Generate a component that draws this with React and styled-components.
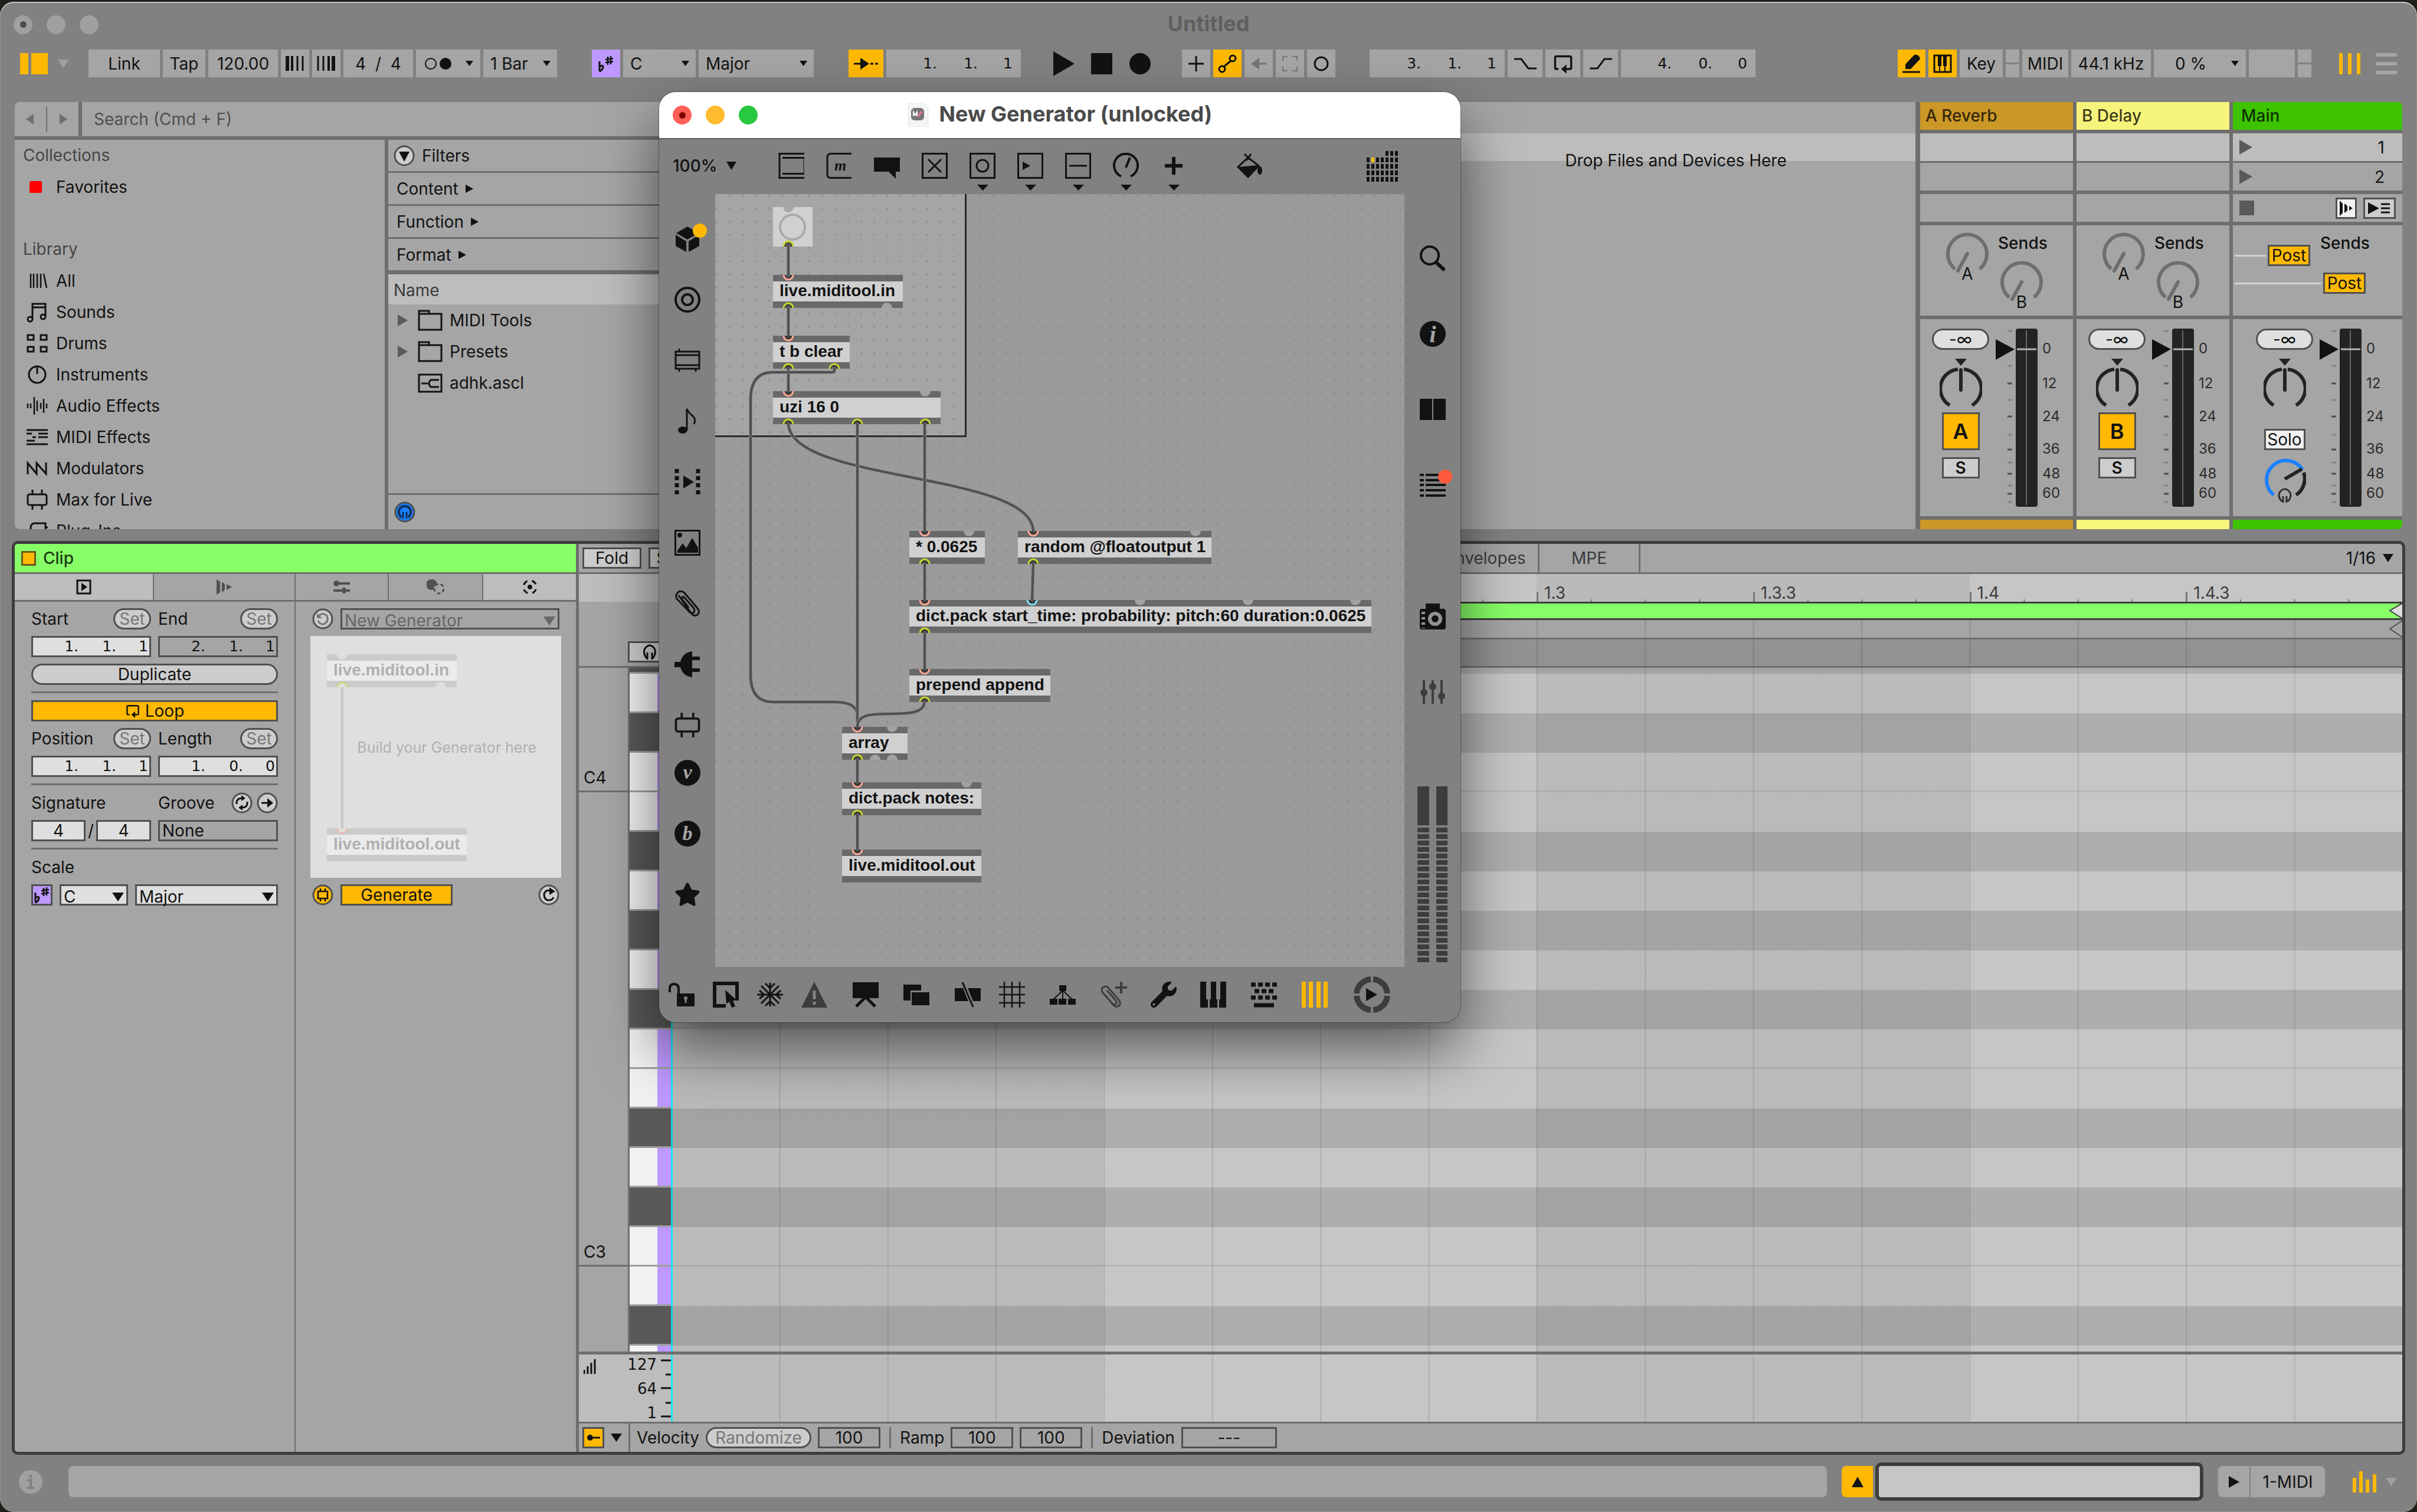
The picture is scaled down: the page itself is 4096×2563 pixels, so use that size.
import React from 'react';
import styled, { createGlobalStyle, css } from 'styled-components';
import { FaStar, FaWrench } from 'react-icons/fa';

const color = {
	window: '#818181',
	control: '#a5a5a5',
	lit: '#bdbdbd',
	line: '#6e6e6e',
	dark: '#3d3d3d',
	edge: '#505050',
	ink: '#121212',
	orange: '#ffb902',
	purple: '#bd99ff',
	green: '#87ff67',
	field: '#dfdfdf',
	button: '#cdcdcd',
};

const GlobalStyle = createGlobalStyle`
	*, *::before, *::after {
		box-sizing:border-box;
	}
	body {
		margin:0;
		background:#211f1a;
		color:${color.ink};
		font-family:Inter, "Liberation Sans", sans-serif;
		font-size:28px;
		line-height:36px;
	}
	button, input, select {
		margin:0;
		padding:0;
		border:0;
		border-radius:0;
		background:none;
		color:inherit;
		font:inherit;
	}
	svg {
		display:block;
		flex:none;
	}
`;

/* ---------- shared parts ---------- */

const Desktop = styled.div`
	position:relative;
	min-height:100vh;
	padding-top:3px;
	overflow:hidden;
`;

const LiveWindow = styled.main`
	display:flex;
	flex-direction:column;
	min-height:calc(100vh - 3px);
	background:${color.window};
	border-radius:24px;
	box-shadow:inset 0 2px 0 #c4c4c4, inset 0 0 0 1px #929292;
`;

const Grow = styled.div`
	flex:1;
`;

const Lights = styled.div`
	display:flex;
	gap:24px;
`;

const Light = styled.button`
	width:32px;
	height:32px;
	border-radius:16px;
	background:${props => props.$color || '#a0a0a0'};
	display:grid;
	place-items:center;

	&::after {
		content:'';
		width:11px;
		height:11px;
		border-radius:6px;
		background:${props => props.$dot || 'transparent'};
	}
`;

const Tri = ({ dir = 'down', w = 20, h = 16, fill = 'currentColor' }) => {
	const paths = {
		down : `M0 0H${w}L${w / 2} ${h}Z`,
		up   : `M0 ${h}H${w}L${w / 2} 0Z`,
		right: `M0 0L${w} ${h / 2}L0 ${h}Z`,
		left : `M${w} 0V${h}L0 ${h / 2}Z`,
	};
	return (
		<svg width={w} height={h} fill={fill}>
			<path d={paths[dir]} />
		</svg>
	);
};

const Draw = ({ w = 36, h = 36, s = 3, children }) => (
	<svg width={w} height={h} viewBox={`0 0 ${w} ${h}`} fill="none" stroke="currentColor" strokeWidth={s}>
		{children}
	</svg>
);

const solid = { fill: 'currentColor', stroke: 'none' };

const PickBox = styled.label`
	display:grid;
	grid-template-columns:1fr;
	align-items:center;
	flex:${props => props.$w ? 'none' : 1};
	width:${props => props.$w ? `${props.$w}px` : 'auto'};
	height:${props => props.$h}px;
	background:${props => props.$bg};
	border:${props => props.$flat ? '0' : `3px solid ${color.edge}`};
	color:${props => props.$ink || color.ink};

	select {
		grid-area:1 / 1;
		width:100%;
		height:100%;
		padding-left:${props => props.$flat ? 12 : 4}px;
		appearance:none;
	}
	svg {
		grid-area:1 / 1;
		justify-self:end;
		margin-right:${props => props.$flat ? 11 : 4}px;
		pointer-events:none;
	}
`;

const Pick = ({ label, value, flat, w, h = 36, bg = color.field, ink }) => (
	<PickBox $flat={flat} $w={w} $h={h} $bg={bg} $ink={ink}>
		<select aria-label={label} defaultValue={value}>
			<option>{value}</option>
		</select>
		{flat ? <Tri w={13} h={9} /> : <Tri w={20} h={15} />}
	</PickBox>
);

/* ---------- title and control bar ---------- */

const TitleBar = styled.header`
	display:grid;
	grid-template-columns:1fr auto 1fr;
	align-items:center;
	height:77px;
	padding:0 23px;
`;

const Title = styled.h1`
	margin:0;
	padding-bottom:4px;
	font-size:36px;
	font-weight:700;
	color:${props => props.$ink || '#5f5f5f'};
`;

const ControlBar = styled.div`
	display:flex;
	align-items:center;
	padding:4px 34px 42px;
`;

const Group = styled.div`
	display:flex;
	align-items:center;
	gap:${props => props.$gap || 5}px;
	margin-left:${props => props.$left || 0}px;
`;

const Cell = styled.button`
	display:flex;
	align-items:center;
	justify-content:${props => props.$between ? 'space-between' : 'center'};
	padding:0 ${props => props.$between ? 12 : 0}px;
	width:${props => props.$w}px;
	height:47px;
	background:${props => props.$on || color.control};
	color:${props => props.$dim ? '#757575' : color.ink};
	white-space:pre;
`;

const CpuLoad = styled.span`
	flex:1;
	padding-right:18px;
	text-align:center;
`;

const SplitCell = styled.div`
	width:${props => props.$w}px;
	height:47px;
	background:linear-gradient(${color.control} 22px, ${color.window} 22px 25px, ${color.control} 25px);
`;

const Segments = styled.div`
	display:flex;
	justify-content:flex-end;
	align-items:center;
	flex:none;
	width:${props => props.$w}px;
	height:${props => props.$h}px;
	padding-right:${props => props.$pad}px;
	background:${props => props.$bg};
	border:${props => props.$flat ? '0' : `3px solid ${color.edge}`};

	input {
		width:${props => props.$step}px;
		text-align:right;
		font-family:"DejaVu Sans", sans-serif;
		font-size:25px;
	}
	input:last-child {
		width:${props => props.$step - 10}px;
	}
`;

const Position = ({ label, value, flat, w = 203, bg = color.field }) => {
	const parts = value.split(' ');
	return (
		<Segments $flat={flat} $w={w} $h={flat ? 47 : 36} $bg={flat ? color.control : bg} $step={flat ? 69 : 64} $pad={flat ? 14 : 2}>
			{parts.map((part, i) => (
				<input key={i} aria-label={`${label} ${['bars', 'beats', 'sixteenths'][i]}`} defaultValue={part} />
			))}
		</Segments>
	);
};

const FlatSharp = () => (
	<Draw w={30} h={32} s={2}>
		<path d="M4 12V29M4 21Q10 17 10 22Q9 27 4 29" strokeWidth="3" />
		<path d="M18 4V18M23 3V17M14 9L27 7M14 14L27 12" strokeWidth="2.5" />
	</Draw>
);

const LoopIcon = ({ w = 30, h = 30 }) => (
	<svg width={w} height={h} viewBox="0 0 30 30" fill="none" stroke="currentColor" strokeWidth="3">
		<path d="M8 23H5Q3 23 3 21V6Q3 4 5 4H25Q27 4 27 6V21Q27 23 25 23H16" />
		<path d="M20 16V30L12 23Z" {...solid} />
	</svg>
);

const Controls = () => (
	<ControlBar>
		<svg width="47" height="36" fill={color.orange}><path d="M0 0H14V36H0ZM19 0H47V36H19Z" /></svg>
		<Group $left={17}><Tri w={19} h={14} fill="#a0a0a0" /></Group>
		<Group $left={33}>
			<Cell $w={121}>Link</Cell>
			<Cell $w={72}>Tap</Cell>
			<Cell $w={118}>120.00</Cell>
			<Cell $w={48} aria-label="Nudge down">
				<Draw w={32} h={25}><path d="M3 0V25" strokeWidth="6" /><path d="M11 0V25" strokeWidth="4" /><path d="M20 0V25M29 0V25" strokeWidth="3" /></Draw>
			</Cell>
			<Cell $w={48} aria-label="Nudge up">
				<Draw w={32} h={25}><path d="M2 0V25M11 0V25" strokeWidth="3" /><path d="M20 0V25" strokeWidth="4" /><path d="M28 0V25" strokeWidth="6" /></Draw>
			</Cell>
			<Cell $w={118}>4  /  4</Cell>
			<Cell $w={109} $between aria-label="Metronome">
				<Draw w={48} h={24} s={2}><circle cx="13" cy="12" r="9" /><circle cx="38" cy="12" r="10" {...solid} /></Draw>
				<Tri w={13} h={9} />
			</Cell>
			<Pick flat label="Quantization" value="1 Bar" w={125} h={47} bg={color.control} />
		</Group>
		<Group $left={59}>
			<Cell $w={48} $on={color.purple} aria-label="Scale"><FlatSharp /></Cell>
			<Pick flat label="Root note" value="C" w={123} h={47} bg={color.control} />
			<Pick flat label="Scale name" value="Major" w={195} h={47} bg={color.control} />
		</Group>
		<Group $left={59}>
			<Cell $w={59} $on={color.orange} aria-label="Follow">
				<Draw w={42} h={20}><path d="M0 10H14M28 10H33M36 10H41" strokeWidth="3" /><path d="M11 0L26 10L11 20Z" {...solid} /></Draw>
			</Cell>
			<Position flat label="Song position" value="1. 1. 1" w={228} />
		</Group>
		<Group $left={55} $gap={28}>
			<Tri dir="right" w={36} h={42} />
			<svg width="36" height="36"><rect width="36" height="36" fill={color.ink} /></svg>
			<svg width="38" height="38"><circle cx="19" cy="19" r="18" fill={color.ink} /></svg>
		</Group>
		<Group $left={52}>
			<Cell $w={48} aria-label="Overdub"><Draw w={26} h={26}><path d="M13 0V26M0 13H26" /></Draw></Cell>
			<Cell $w={48} $on={color.orange} aria-label="Automation">
				<Draw w={32} h={32}><circle cx="7" cy="25" r="5" /><circle cx="25" cy="7" r="5" /><path d="M10 21L22 11" /></Draw>
			</Cell>
			<Cell $w={48} $dim aria-label="Re-enable">
				<Draw w={26} h={20}><path d="M12 10H26" /><path d="M14 0V20L0 10Z" {...solid} /></Draw>
			</Cell>
			<Cell $w={48} $dim aria-label="Capture">
				<Draw w={26} h={26} s={2}><path d="M1 8V1H9M17 1H25V8M25 18V25H17M9 25H1V18" /></Draw>
			</Cell>
			<Cell $w={48} aria-label="Session record"><Draw w={28} h={28}><circle cx="14" cy="14" r="11" /></Draw></Cell>
		</Group>
		<Group $left={58}>
			<Position flat label="Loop start" value="3. 1. 1" w={229} />
			<Cell $w={59} aria-label="Punch in"><Draw w={38} h={20}><path d="M0 2H12L24 18H38" /></Draw></Cell>
			<Cell $w={59} aria-label="Loop"><LoopIcon w={38} h={34} /></Cell>
			<Cell $w={59} aria-label="Punch out"><Draw w={38} h={20}><path d="M0 18H13L25 2H38" /></Draw></Cell>
			<Position flat label="Loop length" value="4. 0. 0" w={228} />
		</Group>
		<Grow />
		<Group>
			<Cell $w={47} $on={color.orange} aria-label="Draw mode">
				<Draw w={32} h={32}><path d="M0 30H30" /><path d="M5 25V17L20 1Q28 -1 30 8L14 25Z" {...solid} /></Draw>
			</Cell>
			<Cell $w={48} $on={color.orange} aria-label="Computer keyboard">
				<Draw w={32} h={32}><rect x="2" y="2" width="28" height="28" /><path d="M11 2V20M20 2V20" strokeWidth="6" /><path d="M11 20V30M20 20V30" strokeWidth="2" /></Draw>
			</Cell>
			<Cell $w={73}>Key</Cell>
			<SplitCell $w={23} />
			<Cell $w={78}>MIDI</Cell>
			<Cell $w={135}>44.1 kHz</Cell>
			<Cell $w={156} $between><CpuLoad>0 %</CpuLoad><Tri w={13} h={9} /></Cell>
			<Cell $w={78} aria-label="Disk overload" />
			<SplitCell $w={23} />
		</Group>
		<Group $left={47} $gap={26}>
			<svg width="36" height="36" fill={color.orange}><path d="M0 0H6V36H0ZM15 0H21V36H15ZM30 0H36V36H30Z" /></svg>
			<svg width="36" height="36" fill="#a5a5a5"><path d="M0 0H36V6H0ZM0 15H36V21H0ZM0 30H36V36H0Z" /></svg>
		</Group>
	</ControlBar>
);

/* ---------- browser ---------- */

const Upper = styled.section`
	display:flex;
	margin:0 25px 20px;
	background:${color.line};
	border-radius:8px;
	overflow:hidden;
`;

const Browser = styled.div`
	display:flex;
	flex-direction:column;
	width:1560px;
	max-height:724px;
	overflow:hidden;
`;

const SearchRow = styled.div`
	display:flex;
	gap:6px;
	height:58px;
	margin-bottom:6px;
	flex:none;
`;

const NavPair = styled.div`
	display:flex;
	align-items:center;
	justify-content:center;
	gap:21px;
	width:108px;
	background:${color.control};
	color:${color.line};
`;

const NavRule = styled.span`
	width:2px;
	height:42px;
	background:${color.line};
`;

const SearchInput = styled.input`
	flex:1;
	padding-left:20px;
	background:${color.control};

	&::placeholder {
		color:#4f4f4f;
		opacity:1;
	}
`;

const BrowserBody = styled.div`
	display:flex;
	gap:6px;
	flex:1;
	min-height:0;
`;

const Sidebar = styled.nav`
	width:627px;
	background:${color.control};
	overflow:hidden;
`;

const SideHead = styled.h2`
	margin:0 0 0 14px;
	font-size:28px;
	font-weight:400;
	line-height:53px;
	color:#454545;
`;

const SideRow = styled.a`
	display:flex;
	align-items:center;
	gap:14px;
	height:53px;
	padding-left:20px;
	color:${color.ink};
	text-decoration:none;
`;

const Gap = styled.div`
	height:53px;
`;

const Swatch = styled.span`
	width:21px;
	height:20px;
	margin:0 10px 0 5px;
	border-radius:2px;
	background:#ff0000;
`;

const Results = styled.div`
	display:flex;
	flex-direction:column;
	flex:1;
	background:${color.control};
`;

const FilterRow = styled.div`
	display:flex;
	align-items:center;
	gap:12px;
	height:56px;
	padding-left:${props => props.$tight ? 9 : 14}px;
	border-bottom:3px solid ${color.line};
	flex:none;
`;

const NameHead = styled.div`
	height:55px;
	padding:9px 9px 0;
	border-top:4px solid ${color.line};
	background:${color.lit};
	color:#3a3a3a;
	flex:none;
`;

const FileRow = styled.div`
	display:flex;
	align-items:center;
	height:53px;
	padding-left:16px;
	flex:none;
`;

const FileMark = styled.span`
	width:34px;
	color:#5a5a5a;
`;

const FileName = styled.span`
	margin-left:12px;
`;

const BrowserFoot = styled.div`
	display:flex;
	align-items:center;
	height:61px;
	margin-top:auto;
	padding-left:10px;
	border-top:3px solid ${color.line};
	flex:none;
`;

const M4L = ({ w = 36, s = 3 }) => (
	<svg width={w} height={w} viewBox="0 0 36 36" fill="none" stroke="currentColor" strokeWidth={s}>
		<rect x="2" y="9" width="32" height="18" rx="3" />
		<path d="M10 1V8M26 1V8M10 28V35M26 28V35" />
	</svg>
);

const library = [
	['All', <Draw><path d="M7 6V30M12 6V30M18 6V30M24 6V30M29 6L34 30" strokeWidth="2.5" /></Draw>],
	['Sounds', <Draw><path d="M10 29V4H32V25M10 10H32" /><circle cx="6" cy="30" r="4" /><circle cx="28" cy="26" r="4" /></Draw>],
	['Drums', <Draw><path d="M2 4H12V12H2ZM24 4H34V12H24ZM2 24H12V32H2ZM24 24H34V32H24Z" /></Draw>],
	['Instruments', <Draw><circle cx="18" cy="18" r="14" /><path d="M18 4V17" /></Draw>],
	['Audio Effects', <Draw><path d="M2 14V22M7 14V22M13 3V33M18 9V27M24 13V23M29 6V30M34 14V22" strokeWidth="2.5" /></Draw>],
	['MIDI Effects', <Draw><path d="M0 6H36M0 12H9M20 12H36M10 18H16M20 18H36M0 24H14M0 30H36" /></Draw>],
	['Modulators', <Draw><path d="M2 28V9L17 27V9L33 27V8" /></Draw>],
	['Max for Live', <M4L />],
	['Plug-Ins', <Draw><path d="M32 5H14Q7 5 7 13V26Q7 32 14 32H32ZM32 12H38" /></Draw>],
];

const Folder = () => (
	<Draw w={42} h={36}><path d="M2 34V2H19V7H40V34ZM2 7H19" /></Draw>
);

const BrowserPane = () => (
	<Browser>
		<SearchRow>
			<NavPair><Tri dir="left" w={13} h={18} /><NavRule /><Tri dir="right" w={13} h={18} /></NavPair>
			<SearchInput aria-label="Search" placeholder="Search (Cmd + F)" />
		</SearchRow>
		<BrowserBody>
			<Sidebar>
				<SideHead>Collections</SideHead>
				<SideRow href="#favorites"><Swatch />Favorites</SideRow>
				<Gap />
				<SideHead>Library</SideHead>
				{library.map(([name, icon]) => (
					<SideRow key={name} href={`#${name}`}>{icon}{name}</SideRow>
				))}
			</Sidebar>
			<Results>
				<FilterRow $tight>
					<Draw><circle cx="18" cy="18" r="16" fill={color.button} stroke={color.edge} /><path d="M9 11H27L18 28Z" {...solid} /></Draw>
					Filters
				</FilterRow>
				{['Content', 'Function', 'Format'].map(name => (
					<FilterRow key={name}>{name}<Tri dir="right" w={13} h={14} /></FilterRow>
				))}
				<NameHead>Name</NameHead>
				<FileRow><FileMark><Tri dir="right" w={17} h={20} /></FileMark><Folder /><FileName>MIDI Tools</FileName></FileRow>
				<FileRow><FileMark><Tri dir="right" w={17} h={20} /></FileMark><Folder /><FileName>Presets</FileName></FileRow>
				<FileRow>
					<FileMark />
					<Draw w={42} h={36}><path d="M2 4H40V33H2ZM6 19H17M36 13H22Q16 19 22 25H36" /></Draw>
					<FileName>adhk.ascl</FileName>
				</FileRow>
				<BrowserFoot>
					<Draw>
						<circle cx="18" cy="18" r="16" fill="#1a80ff" stroke={color.edge} />
						<path d="M12 27Q7 22 8 15Q11 8 18 8Q25 8 28 15Q29 22 24 27" stroke="#12305c" strokeWidth="4" />
						<path d="M15 18V29M21 18V29" stroke="#12305c" strokeWidth="3" />
					</Draw>
				</BrowserFoot>
			</Results>
		</BrowserBody>
	</Browser>
);

/* ---------- session and mixer ---------- */

const Session = styled.div`
	flex:1;
	display:flex;
	justify-content:flex-end;
	background:linear-gradient(${color.control} 53px, ${color.lit} 53px 100px, ${color.control} 100px);
`;

const DropZone = styled.p`
	width:812px;
	margin:0;
	padding-top:81px;
	text-align:center;
`;

const Mixer = styled.div`
	display:flex;
	gap:6px;
	padding-left:8px;
`;

const Track = styled.div`
	display:flex;
	flex-direction:column;
	gap:6px;
	width:${props => props.$w}px;
`;

const TrackName = styled.div`
	height:47px;
	padding:5px 0 0 ${props => props.$pad || 9}px;
	background:${props => props.$color};
	color:rgba(0, 0, 0, 0.75);
	font-weight:500;
`;

const Slots = styled.div`
	display:flex;
	flex-direction:column;
	gap:3px;
`;

const Slot = styled.div`
	display:flex;
	align-items:center;
	gap:11px;
	height:47px;
	padding:0 ${props => props.$right || 30}px 0 11px;
	background:${props => props.$lit ? color.lit : color.control};
	color:${color.ink};
`;

const SlotNumber = styled.span`
	margin-left:auto;
`;

const Sends = styled.div`
	display:flex;
	height:153px;
	padding:12px 0 0 44px;
	background:${color.control};
`;

const SendsMain = styled.div`
	height:153px;
	padding:12px 0 0 3px;
	background:${color.control};
`;

const SendColumn = styled.div`
	display:flex;
	flex-direction:column;
	gap:12px;
	margin-left:16px;
`;

const SendsTitle = styled.span`
	font-weight:500;
	margin-left:${props => props.$left || 0}px;
`;

const SendKnobBox = styled.div`
	padding-left:4px;
`;

const MainSendRow = styled.div`
	display:flex;
	align-items:flex-start;
	margin-top:${props => props.$top || 0}px;
`;

const SendLine = styled.div`
	display:flex;
	align-items:center;
	gap:3px;
	margin-top:${props => props.$top || 0}px;

	&::before {
		content:'';
		width:${props => props.$w}px;
		height:3px;
		background:#d2d2d2;
	}
`;

const SmallButton = styled.button`
	display:flex;
	align-items:center;
	justify-content:center;
	gap:8px;
	flex:${props => props.$w ? 'none' : 1};
	width:${props => props.$w ? `${props.$w}px` : 'auto'};
	height:${props => props.$h || 36}px;
	border:3px solid ${color.edge};
	border-radius:${props => props.$round ? 18 : 0}px;
	background:${props => props.$bg || color.button};
	color:${props => props.$dim ? '#777777' : color.ink};
	font-size:${props => props.$big ? 36 : 28}px;
	font-weight:${props => props.$bold ? 600 : 400};
	line-height:28px;
	margin-top:${props => props.$top || 0}px;
`;

const Strip = styled.div`
	display:flex;
	align-items:flex-start;
	height:334px;
	padding:16px 0 0 ${props => props.$left}px;
	background:${color.control};
`;

const StripLeft = styled.div`
	display:flex;
	flex-direction:column;
	align-items:center;
	width:97px;
	margin-right:11px;

	button {
		flex:none;
	}
`;

const KnobGap = styled.div`
	height:${props => props.$h}px;
`;

const TrackFoot = styled.div`
	height:16px;
	background:${props => props.$color};
`;

const SendKnob = ({ name }) => (
	<svg width="72" height="92" fill="none" stroke="#6e6e6e" strokeWidth="6">
		<path d="M15 62A33 33 0 1 1 57 62" />
		<path d="M36 36L20 65" strokeLinecap="round" />
		<text x="36" y="80" textAnchor="middle" fontSize="28" fill={color.ink} stroke="none">{name}</text>
	</svg>
);

const PanKnob = () => (
	<svg width="72" height="86" fill="none" stroke="#232323" strokeWidth="6">
		<path d="M26 0H46L36 12Z" fill="#232323" stroke="none" />
		<path d="M17 79A33 33 0 0 1 31 18M41 18A33 33 0 0 1 55 79" />
		<path d="M36 19V53" strokeLinecap="round" />
	</svg>
);

const CueKnob = () => (
	<svg width="72" height="80" fill="none" strokeWidth="6">
		<path d="M17 64A33 33 0 1 1 66 21" stroke="#1a80ff" />
		<path d="M68 26A33 33 0 0 1 55 64M36 37L65 20" stroke="#232323" />
		<path d="M31 75Q24 68 27 60Q31 54 36 54Q41 54 45 60Q48 68 41 75M33 66V77M39 66V77" stroke="#2c2c2c" strokeWidth="3" />
	</svg>
);

const scaleLabels = [[0, 33], [12, 92], [24, 148], [36, 203], [48, 245], [60, 278]];
const darkTicks = [93, 149, 205, 246, 280];
const lightTicks = [4, 63, 121, 180, 227, 266, 294];

const Meter = () => (
	<svg width="110" height="302">
		<path d="M0 18L32 35L0 53Z" fill={color.ink} />
		<rect x="34" y="0" width="37" height="302" rx="4" fill="#232323" />
		<path d="M52 3V299" stroke="#666666" strokeWidth="2" />
		<path d="M36 35H69" stroke="#b5b5b5" strokeWidth="3" />
		{darkTicks.map(y => <path key={y} d={`M20 ${y}H28`} stroke="#4c4c4c" strokeWidth="3" />)}
		{lightTicks.map(y => <path key={y} d={`M20 ${y}H28`} stroke="#858585" strokeWidth="3" />)}
		{scaleLabels.map(([text, y]) => (
			<text key={text} x="79" y={y + 9} fontSize="24" fill="#2c2c2c">{text}</text>
		))}
	</svg>
);

const ReturnTrack = ({ letter, name, tint }) => (
	<Track $w={259}>
		<TrackName $color={tint}>{letter} {name}</TrackName>
		<Slots><Slot $lit /><Slot /></Slots>
		<Slot />
		<Sends>
			<SendKnob name="A" />
			<SendColumn>
				<SendsTitle>Sends</SendsTitle>
				<SendKnobBox><SendKnob name="B" /></SendKnobBox>
			</SendColumn>
		</Sends>
		<Strip $left={20}>
			<StripLeft>
				<SmallButton $w={97} $round $bg={color.field}>-∞</SmallButton>
				<KnobGap $h={15} />
				<PanKnob />
				<SmallButton $w={64} $h={64} $top={5} $bold $big $bg={color.orange}>{letter}</SmallButton>
				<SmallButton $w={64} $top={12} $bold>S</SmallButton>
			</StripLeft>
			<Meter />
		</Strip>
		<TrackFoot $color={tint} />
	</Track>
);

const MixerPane = () => (
	<Mixer>
		<ReturnTrack letter="A" name="Reverb" tint="#cb9727" />
		<ReturnTrack letter="B" name="Delay" tint="#f7f47c" />
		<Track $w={287}>
			<TrackName $color="#3dc300" $pad={14}>Main</TrackName>
			<Slots>
				<Slot $lit><Tri dir="right" w={22} h={25} fill="#5a5a5a" /><SlotNumber>1</SlotNumber></Slot>
				<Slot><Tri dir="right" w={22} h={25} fill="#5a5a5a" /><SlotNumber>2</SlotNumber></Slot>
			</Slots>
			<Slot $right={11}>
				<svg width="25" height="25"><rect width="25" height="25" fill="#5a5a5a" /></svg>
				<Grow />
				<SmallButton $w={36} $bg="#f1f1f1" aria-label="Back to arrangement">
					<svg width="22" height="26" fill={color.ink}><path d="M0 0L5 5V21L0 26ZM8 5L13 9V17L8 21ZM16 9L22 13L16 17Z" /></svg>
				</SmallButton>
				<SmallButton $w={55} aria-label="Scene follow">
					<Draw w={40} h={20}><path d="M0 0L19 10L0 20Z" {...solid} /><path d="M22 3H37M22 10H37M22 17H37" /></Draw>
				</SmallButton>
			</Slot>
			<SendsMain>
				<MainSendRow>
					<SendLine $w={53} $top={21}><SmallButton $w={72} $bg={color.orange}>Post</SmallButton></SendLine>
					<SendsTitle $left={17}>Sends</SendsTitle>
				</MainSendRow>
				<MainSendRow $top={11}>
					<SendLine $w={147}><SmallButton $w={72} $bg={color.orange}>Post</SmallButton></SendLine>
				</MainSendRow>
			</SendsMain>
			<Strip $left={39}>
				<StripLeft>
					<SmallButton $w={97} $round $bg={color.field}>-∞</SmallButton>
					<KnobGap $h={15} />
					<PanKnob />
					<SmallButton $w={70} $top={33} $bg="#f1f1f1">Solo</SmallButton>
					<KnobGap $h={12} />
					<CueKnob />
				</StripLeft>
				<Meter />
			</Strip>
			<TrackFoot $color="#3dc300" />
		</Track>
	</Mixer>
);

/* ---------- clip view ---------- */

const Detail = styled.section`
	display:flex;
	flex:1;
	min-height:0;
	margin:0 20px;
	border:5px solid ${color.dark};
	border-radius:10px;
	overflow:hidden;
	background:${color.control};
`;

const Clip = styled.div`
	display:flex;
	flex-direction:column;
	flex:none;
	width:956px;
	border-right:5px solid ${color.line};
`;

const ClipHead = styled.label`
	display:flex;
	align-items:center;
	gap:12px;
	height:51px;
	padding-left:11px;
	background:${color.green};
	border-bottom:3px solid ${color.line};
	color:#1d3b14;
	font-weight:500;

	input {
		appearance:none;
		width:25px;
		height:25px;
		background:${color.orange};
		border:3px solid #6b5a1c;
	}
`;

const ClipTabs = styled.div`
	display:grid;
	grid-template-columns:236px 240px 158px 160px 157px;
	height:47px;
	border-bottom:3px solid ${color.line};
`;

const ClipTab = styled.button`
	display:grid;
	place-items:center;
	background:${props => props.$on ? color.lit : color.control};
	color:${props => props.$on ? color.ink : '#505050'};
	border-right:2px solid ${color.line};

	&:last-child {
		border-right:0;
	}
`;

const ClipBody = styled.div`
	display:flex;
	flex:1;
`;

const ClipColumn = styled.div`
	display:flex;
	flex-direction:column;
	gap:11px;
	flex:${props => props.$last ? 1 : 'none'};
	width:476px;
	padding:11px 28px;
	border-right:${props => props.$last ? 0 : 2}px solid ${color.line};
`;

const Line = styled.div`
	display:flex;
	align-items:center;
	gap:12px;
	height:36px;
	flex:none;
`;

const Half = styled.div`
	display:flex;
	align-items:center;
	gap:${props => props.$gap || 7}px;
	width:203px;
	flex:none;
`;

const Rule = styled.hr`
	width:100%;
	height:4px;
	margin:0;
	border:0;
	border-bottom:1px solid ${color.control};
	background:${color.line};
	flex:none;
`;

const Num = styled.input`
	width:${props => props.$w}px;
	height:36px;
	flex:none;
	padding:${props => props.$start ? '0 4px' : 0};
	border:3px solid ${color.edge};
	background:${props => props.$plain ? color.control : color.field};
	text-align:${props => props.$start ? 'left' : 'center'};
`;

const Preview = styled.div`
	position:relative;
	display:flex;
	align-items:center;
	justify-content:flex-end;
	height:410px;
	margin:0 -3px;
	padding:0 42px 32px 0;
	background:${color.field};
	color:#b0b0b0;
	font-size:25px;
`;

const PreviewCord = styled.span`
	position:absolute;
	left:52px;
	top:86px;
	width:4px;
	height:240px;
	background:#c4c4c4;
`;

const RoundIcon = ({ bg = color.button, ink = color.ink, children }) => (
	<svg width="36" height="36" viewBox="0 0 36 36" fill="none" stroke={ink} strokeWidth="3">
		<circle cx="18" cy="18" r="16" fill={bg} stroke={color.edge} />
		{children}
	</svg>
);

const ClipPane = () => (
	<Clip>
		<ClipHead><input type="checkbox" defaultChecked />Clip</ClipHead>
		<ClipTabs>
			<ClipTab $on aria-label="Clip properties">
				<Draw w={26} h={26}><rect x="2" y="2" width="22" height="22" /><path d="M9 6L19 13L9 20Z" {...solid} /></Draw>
			</ClipTab>
			<ClipTab aria-label="Launch">
				<svg width="26" height="26" fill="currentColor"><path d="M0 0L6 4V22L0 26ZM9 4L14 8V18L9 22ZM17 8L26 13L17 18Z" /></svg>
			</ClipTab>
			<ClipTab aria-label="Transform controls">
				<Draw w={28} h={22}><path d="M6 5H28M0 17H28" strokeWidth="4" /><circle cx="5" cy="5" r="5" {...solid} /><path d="M18 12V22" strokeWidth="5" /></Draw>
			</ClipTab>
			<ClipTab aria-label="Transform">
				<Draw w={30} h={26}>
					<path d="M9 0A9 9 0 0 1 18 7Q12 10 12 17A9 9 0 1 1 9 0Z" {...solid} />
					<circle cx="21" cy="16" r="8" strokeDasharray="6 4" />
				</Draw>
			</ClipTab>
			<ClipTab $on aria-label="Generate">
				<Draw w={28} h={28}><circle cx="14" cy="14" r="11" strokeDasharray="9 8" strokeDashoffset="13" /><circle cx="14" cy="14" r="4" {...solid} /></Draw>
			</ClipTab>
		</ClipTabs>
		<ClipBody>
			<ClipColumn>
				<Line>
					<Half>Start<Grow /><SmallButton $w={64} $round $dim>Set</SmallButton></Half>
					<Half>End<Grow /><SmallButton $w={64} $round $dim>Set</SmallButton></Half>
				</Line>
				<Line>
					<Position label="Start" value="1. 1. 1" />
					<Position label="End" value="2. 1. 1" bg={color.control} />
				</Line>
				<Line><SmallButton $round>Duplicate</SmallButton></Line>
				<Rule />
				<Line><SmallButton $bg={color.orange}><LoopIcon w={26} h={24} />Loop</SmallButton></Line>
				<Line>
					<Half>Position<Grow /><SmallButton $w={64} $round $dim>Set</SmallButton></Half>
					<Half>Length<Grow /><SmallButton $w={64} $round $dim>Set</SmallButton></Half>
				</Line>
				<Line>
					<Position label="Position" value="1. 1. 1" />
					<Position label="Length" value="1. 0. 0" />
				</Line>
				<Rule />
				<Line>
					<Half>Signature</Half>
					<Half>
						Groove<Grow />
						<RoundIcon><path d="M9 20Q8 10 18 10M27 16Q28 26 18 26" /><path d="M17 5L24 10L17 15ZM19 21L12 26L19 31Z" {...solid} fill={color.ink} /></RoundIcon>
						<RoundIcon><path d="M8 18H20" /><path d="M18 10L28 18L18 26Z" {...solid} fill={color.ink} /></RoundIcon>
					</Half>
				</Line>
				<Line>
					<Half $gap={4}><Num $w={92} aria-label="Numerator" defaultValue="4" />/<Num $w={93} aria-label="Denominator" defaultValue="4" /></Half>
					<Num $w={203} $plain $start aria-label="Groove" defaultValue="None" />
				</Line>
				<Rule />
				<Line>Scale</Line>
				<Line>
					<SmallButton $w={36} $bg={color.purple} aria-label="Scale"><FlatSharp /></SmallButton>
					<Pick label="Clip root" value="C" w={116} />
					<Pick label="Clip scale" value="Major" />
				</Line>
			</ClipColumn>
			<ClipColumn $last>
				<Line>
					<RoundIcon ink="#777777"><path d="M11 13Q18 6 25 13Q29 22 20 27Q13 28 10 21" /><path d="M8 8V17H17Z" fill="#777777" stroke="none" /></RoundIcon>
					<Pick label="Generator" value="New Generator" bg={color.control} ink="#666666" />
				</Line>
				<Preview>
					<PreviewCord />
					<PatchObject faded x={28} y={31} w={220} text="live.miditool.in" ins={[[26]]} outs={[[26, 'yellow'], [193]]} />
					<PatchObject faded x={28} y={326} w={237} text="live.miditool.out" ins={[[26, 'pink']]} outs={[]} />
					Build your Generator here
				</Preview>
				<Line>
					<RoundIcon bg={color.orange}><path d="M10 12H26V24H10ZM14 7V12M22 7V12M14 24V29M22 24V29" strokeWidth="2.5" /></RoundIcon>
					<SmallButton $w={190} $bg={color.orange}>Generate</SmallButton>
					<Grow />
					<RoundIcon><path d="M24 12Q14 7 10 16Q10 27 18 27Q24 27 26 22" /><path d="M19 5L29 12L19 18Z" {...solid} fill={color.ink} /></RoundIcon>
				</Line>
			</ClipColumn>
		</ClipBody>
	</Clip>
);

/* ---------- note editor ---------- */

const Editor = styled.div`
	display:flex;
	flex-direction:column;
	flex:1;
	min-width:0;
`;

const EditorBar = styled.div`
	display:flex;
	align-items:center;
	gap:12px;
	height:51px;
	padding:0 15px 0 6px;
	border-bottom:3px solid ${color.line};
	flex:none;
`;

const EditorTabs = styled.div`
	display:flex;
	align-self:stretch;
	margin-left:1048px;
	color:#3a3a3a;
`;

const EditorTab = styled.button`
	width:${props => props.$w}px;
	border-right:3px solid ${color.line};
`;

const beats = css`
	background-image:
		linear-gradient(90deg, rgba(0, 0, 0, 0.11) 2px, transparent 2px),
		linear-gradient(90deg, rgba(0, 0, 0, 0.06) 25%, transparent 25% 50%, rgba(0, 0, 0, 0.06) 50% 75%, transparent 75%);
	background-size:6.25% 100%, 100% 100%;
	background-origin:border-box;
`;

const thinLines = css`
	background-image:linear-gradient(90deg, rgba(0, 0, 0, 0.13) 2px, transparent 2px);
	background-size:6.25% 100%;
`;

const Ruler = styled.div`
	display:flex;
	height:47px;
	padding-left:156px;
	background:${color.lit};
	color:#3c3c3c;
	flex:none;
`;

const RulerCell = styled.div`
	flex:1;
	padding:14px 0 0 13px;
	background-color:${props => props.$lit ? '#c6c6c6' : '#bababa'};
	background-image:linear-gradient(#7a7a7a, #7a7a7a), linear-gradient(90deg, #7a7a7a 2px, transparent 2px);
	background-position:0 100%, 0 100%;
	background-size:3px 17px, 25% 4px;
	background-repeat:no-repeat, repeat-x;
`;

const Markers = styled.div`
	display:flex;
	flex:none;
`;

const MarkerLeft = styled.div`
	display:flex;
	align-items:flex-end;
	justify-content:flex-end;
	width:156px;
	padding-bottom:6px;
	border-bottom:3px solid ${color.line};
`;

const MarkerRows = styled.div`
	flex:1;
`;

const ClipRange = styled.div`
	display:flex;
	justify-content:flex-end;
	height:31px;
	background:${color.green};
	border-top:3px solid ${color.dark};
	border-bottom:3px solid ${color.dark};
`;

const LoopRange = styled.div`
	display:flex;
	justify-content:flex-end;
	height:33px;
	background-color:${color.control};
	border-bottom:3px solid ${color.line};
	${thinLines}
`;

const Scrub = styled.div`
	height:48px;
	background-color:#929292;
	border-bottom:3px solid ${color.line};
	${thinLines}
`;

const Roll = styled.div`
	flex:1 1 0;
	min-height:0;
	overflow:hidden;
`;

const NoteRow = styled.div`
	display:flex;
	height:${props => props.$h || 67}px;
`;

const Octave = styled.div`
	display:flex;
	align-items:flex-end;
	width:86px;
	padding:0 0 4px 8px;
	border-right:3px solid ${color.line};
	border-bottom:${props => props.$mark ? `3px solid ${color.line}` : 0};
`;

const Key = styled.div`
	width:70px;
	border-bottom:3px solid #9d9d9d;
	background:${props => props.$black ? '#585858' : `linear-gradient(90deg, #f1f1f1 47px, ${color.purple} 47px)`};
`;

const Lane = styled.div`
	flex:1;
	border-left:3px solid ${props => props.$black ? '#13cddd' : '#16e5f5'};
	background-color:#c6c6c6;
	${beats}
	box-shadow:inset 0 ${props => props.$black ? 70 : 0}px 0 rgba(0, 0, 0, 0.12), inset 0 -${props => props.$seam ? 3 : 0}px 0 rgba(0, 0, 0, 0.07);
`;

const Velocity = styled.div`
	display:flex;
	height:122px;
	border-top:5px solid ${color.line};
	border-bottom:3px solid ${color.line};
	flex:none;
`;

const VelocityScale = styled.div`
	display:flex;
	justify-content:space-between;
	width:156px;
	padding:0 0 0 8px;
	background:${color.lit};
`;

const VelocityNumbers = styled.div`
	display:flex;
	flex-direction:column;
	flex:1;
	gap:7px;
	padding-right:7px;
	text-align:right;
	font-family:"DejaVu Sans", sans-serif;
	font-size:26px;
	line-height:34px;
`;

const VelocityBar = styled.div`
	display:flex;
	align-items:center;
	gap:11px;
	height:48px;
	padding-left:6px;
	flex:none;
`;

const BarRule = styled.span`
	width:3px;
	height:${props => props.$full ? 48 : 36}px;
	margin:0 ${props => props.$full ? 0 : 4}px;
	background:${color.line};
`;

const rollNotes = ['D#', 'D', 'C#', 'C4', 'B', 'A#', 'A', 'G#', 'G', 'F#', 'F', 'E', 'D#', 'D', 'C#', 'C3', 'B', 'A#', 'A'];
const rulerLabels = ['1', '1.1.3', '1.2', '1.2.3', '1.3', '1.3.3', '1.4', '1.4.3'];

const EditorPane = () => (
	<Editor>
		<EditorBar>
			<SmallButton $w={100}>Fold</SmallButton>
			<SmallButton $w={100}>Scale</SmallButton>
			<EditorTabs>
				<EditorTab $w={170}>Notes</EditorTab>
				<EditorTab $w={180}>Envelopes</EditorTab>
				<EditorTab $w={171}>MPE</EditorTab>
			</EditorTabs>
			<Grow />
			<span>1/16</span>
			<Tri w={18} h={14} />
		</EditorBar>
		<Ruler>
			{rulerLabels.map((label, i) => (
				<RulerCell key={label} $lit={i % 4 > 1}>{label}</RulerCell>
			))}
		</Ruler>
		<Markers>
			<MarkerLeft>
				<SmallButton $w={73} aria-label="Preview">
					<Draw w={30} h={28}><path d="M11 26Q4 19 6 10Q10 3 15 3Q20 3 24 10Q26 19 19 26M11 15V27M19 15V27" /></Draw>
				</SmallButton>
			</MarkerLeft>
			<MarkerRows>
				<ClipRange><Draw w={24} h={25} s={2}><path d="M25 -1L3 12L25 26" fill="#dedede" stroke={color.dark} /></Draw></ClipRange>
				<LoopRange><Draw w={24} h={30} s={2}><path d="M24 1L3 15L24 29" stroke={color.edge} /></Draw></LoopRange>
				<Scrub />
			</MarkerRows>
		</Markers>
		<Roll>
			{rollNotes.map((note, i) => {
				const black = note.includes('#');
				const next = rollNotes[i + 1] || '#';
				const octave = note.length === 2 && !black;
				return (
					<NoteRow key={i} $h={i === 0 ? 10 : 67}>
						<Octave $mark={octave}>{octave ? note : null}</Octave>
						<Key $black={black} />
						<Lane $black={black} $seam={!black && !next.includes('#')} />
					</NoteRow>
				);
			})}
		</Roll>
		<Velocity>
			<VelocityScale>
				<Draw w={22} h={36}><path d="M1 33V26M7 33V20M13 33V14M19 33V8" /></Draw>
				<VelocityNumbers><span>127</span><span>64</span><span>1</span></VelocityNumbers>
				<Draw w={17} h={114}><path d="M0 10H17M8 34H17M0 57H17M8 82H17M0 105H17" /></Draw>
			</VelocityScale>
			<Lane $black={false} />
		</Velocity>
		<VelocityBar>
			<SmallButton $w={37} $bg={color.orange} aria-label="Velocity lane">
				<Draw w={22} h={12}><path d="M4 6H22" /><circle cx="5" cy="6" r="5" {...solid} /></Draw>
			</SmallButton>
			<Tri w={19} h={14} />
			<BarRule $full />
			Velocity
			<SmallButton $w={179} $round $dim>Randomize</SmallButton>
			<Num $w={106} $plain aria-label="Randomize amount" defaultValue="100" />
			<BarRule />
			Ramp
			<Num $w={106} $plain aria-label="Ramp start" defaultValue="100" />
			<Num $w={106} $plain aria-label="Ramp end" defaultValue="100" />
			<BarRule />
			Deviation
			<Num $w={162} $plain aria-label="Deviation" defaultValue="---" />
		</VelocityBar>
	</Editor>
);

/* ---------- status bar ---------- */

const StatusBar = styled.footer`
	display:flex;
	align-items:center;
	height:97px;
	padding:0 34px 6px 32px;
`;

const StatusText = styled.div`
	flex:1;
	height:53px;
	margin:0 25px 0 44px;
	border-radius:8px;
	background:${color.control};
`;

const StatusButton = styled.button`
	display:grid;
	place-items:center;
	width:${props => props.$w}px;
	height:53px;
	background:${props => props.$bg || color.control};
	border-radius:${props => props.$side === 'right' ? '0 8px 8px 0' : '8px 0 0 8px'};
	margin-right:${props => props.$gap}px;
`;

const DeviceSlot = styled.div`
	width:556px;
	height:65px;
	margin-right:25px;
	border:6px solid ${color.dark};
	border-radius:10px;
	background:#c6c6c6;
`;

const Status = () => (
	<StatusBar>
		<svg width="40" height="40">
			<circle cx="20" cy="20" r="20" fill="#a0a0a0" />
			<path d="M20 8V13M15 17H20V30M14 30H26" stroke={color.window} strokeWidth="4" fill="none" />
		</svg>
		<StatusText />
		<StatusButton $w={53} $bg={color.orange} $gap={4} aria-label="Show device view"><Tri dir="up" w={20} h={18} /></StatusButton>
		<DeviceSlot />
		<StatusButton $w={53} $gap={2} aria-label="Play clip"><Tri dir="right" w={18} h={20} /></StatusButton>
		<StatusButton $w={126} $gap={47} $side="right">1-MIDI</StatusButton>
		<svg width="40" height="36" fill={color.orange}><path d="M0 11H6V36H0ZM11 0H17V36H11ZM22 14H28V36H22ZM34 5H40V36H34Z" /></svg>
		<Group $left={16}><Tri w={19} h={14} fill="#a0a0a0" /></Group>
	</StatusBar>
);

/* ---------- patcher window ---------- */

const Patcher = styled.section`
	position:absolute;
	left:1117px;
	top:156px;
	display:flex;
	flex-direction:column;
	width:1358px;
	border-radius:28px;
	background:${color.window};
	box-shadow:0 0 0 1px rgba(0, 0, 0, 0.3), 0 46px 100px rgba(0, 0, 0, 0.55);
	overflow:hidden;
`;

const PatchTitle = styled.header`
	display:grid;
	grid-template-columns:1fr auto 1fr;
	align-items:center;
	height:80px;
	padding:0 23px;
	background:#ffffff;
	border-bottom:2px solid #5c5c5c;
`;

const DocTitle = styled.div`
	display:flex;
	align-items:center;
	gap:18px;
`;

const PatchTools = styled.div`
	display:flex;
	align-items:flex-start;
	gap:37px;
	height:93px;
	padding:23px 104px 0 23px;
`;

const Zoom = styled.button`
	display:flex;
	align-items:center;
	justify-content:space-between;
	width:108px;
	height:44px;
	margin-right:34px;
	font-weight:500;
`;

const Tool = styled.button`
	display:flex;
	flex-direction:column;
	align-items:center;
	gap:10px;
	margin-left:${props => props.$left || 0}px;
`;

const PatchMiddle = styled.div`
	display:flex;
`;

const SideBar = styled.div`
	display:flex;
	flex-direction:column;
	align-items:center;
	width:95px;
`;

const SideGroup = styled.div`
	display:flex;
	flex-direction:column;
	gap:${props => props.$gap}px;
	margin-top:${props => props.$top}px;
`;

const Canvas = styled.div`
	position:relative;
	flex:1;
	height:1310px;
	background:#9b9b9b;
	overflow:hidden;
`;

const CanvasArt = styled.svg`
	position:absolute;
	left:0;
	top:0;
`;

const ObjectBox = styled.div`
	position:absolute;
	left:${props => props.$x}px;
	top:${props => props.$y}px;
	width:${props => props.$w}px;
	background:${props => props.$faded ? '#ebebeb' : '#d0d0d0'};
	color:${props => props.$faded ? '#b0b0b0' : color.ink};
	font-family:"Liberation Sans", Arial, sans-serif;
	font-size:28px;
	font-weight:700;
	line-height:31px;
	white-space:pre;
`;

const ObjectText = styled.div`
	height:34px;
	padding-left:11px;
`;

const jackColor = { pink: '#ffa896', yellow: '#c9da2e', cyan: '#7fe3f0' };

const Edge = ({ w, jacks, bottom, faded }) => (
	<svg width={w} height="11">
		<rect width={w} height="11" fill={faded ? '#cbcbcb' : '#696969'} />
		{jacks.map(([x, tone]) => (
			<circle
				key={x} cx={x} cy={bottom ? 11 : 0} r={tone ? 8 : 9}
				fill={tone ? (faded ? '#dfdfdf' : '#3a3a3a') : (faded ? '#dfdfdf' : '#a2a2a2')}
				stroke={tone ? jackColor[tone] : 'none'} strokeOpacity={faded ? 0.5 : 1} strokeWidth="3"
			/>
		))}
	</svg>
);

const PatchObject = ({ x, y, w, text, ins, outs, faded }) => (
	<ObjectBox $x={x} $y={y} $w={w} $faded={faded}>
		<Edge w={w} jacks={ins} faded={faded} />
		<ObjectText>{text}</ObjectText>
		<Edge w={w} jacks={outs} bottom faded={faded} />
	</ObjectBox>
);

const objects = [
	{ x: 98, y: 137, w: 220, text: 'live.miditool.in', ins: [[26, 'pink']], outs: [[26, 'yellow'], [193]] },
	{ x: 98, y: 240, w: 130, text: 't b clear', ins: [[26, 'pink']], outs: [[26, 'yellow'], [104, 'yellow']] },
	{ x: 98, y: 334, w: 284, text: 'uzi 16 0', ins: [[26, 'pink'], [258]], outs: [[26, 'yellow'], [143, 'yellow'], [258, 'yellow']] },
	{ x: 329, y: 571, w: 128, text: '* 0.0625', ins: [[26, 'pink'], [101]], outs: [[26, 'yellow']] },
	{ x: 513, y: 571, w: 328, text: 'random @floatoutput 1', ins: [[26, 'pink'], [301]], outs: [[26, 'yellow']] },
	{ x: 329, y: 688, w: 783, text: 'dict.pack start_time: probability: pitch:60 duration:0.0625', ins: [[26, 'pink'], [208, 'cyan'], [391], [574], [756]], outs: [[26, 'yellow']] },
	{ x: 329, y: 805, w: 239, text: 'prepend append', ins: [[26, 'pink']], outs: [[26, 'yellow']] },
	{ x: 215, y: 903, w: 111, text: 'array', ins: [[26, 'pink'], [85]], outs: [[26, 'yellow'], [56], [85]] },
	{ x: 215, y: 997, w: 236, text: 'dict.pack notes:', ins: [[26, 'pink'], [211]], outs: [[26, 'yellow']] },
	{ x: 215, y: 1111, w: 236, text: 'live.miditool.out', ins: [[26, 'pink']], outs: [] },
];

// the ends stop inside the jacks so that their rings stay visible
const cords = [
	'M124 84V140',
	'M124 190V240',
	'M124 294V335',
	'M202 293V299Q202 302 198 302H98Q60 302 60 348V815Q60 861 98 861H203Q241 861 241 885V904',
	'M124 388C124 490 539 470 539 572',
	'M241 388V904',
	'M355 388V572',
	'M355 625V689',
	'M539 625L537 689',
	'M355 742V806',
	'M355 859C355 902 241 860 241 902',
	'M241 957V998',
	'M241 1051V1112',
];

const I44 = ({ s = 3, size = 44, children }) => (
	<svg width={size} height={size} viewBox="0 0 44 44" fill="none" stroke="currentColor" strokeWidth={s}>{children}</svg>
);

const Box44 = ({ children }) => (
	<I44><rect x="1.5" y="1.5" width="41" height="41" />{children}</I44>
);

const script = { fontFamily: '"Liberation Serif", serif', fontStyle: 'italic', fontWeight: 700, stroke: 'none', textAnchor: 'middle' };

const calendarCells = [];
for (let row = 0; row < 5; row += 1) {
	for (let col = row === 0 ? 4 : 0; col < 7; col += 1) {
		calendarCells.push([col * 8, row * 11, row === 1 && col === 1]);
	}
}

const topTools = [
	['object', <I44><path d="M2 0V44M0 1.5H44M7 8.5H44M7 35.5H44M0 42.5H44" /><path d="M43 8V36" strokeWidth="1" /></I44>],
	['message', <I44><path d="M43 1.5H8Q2 1.5 2 8V36Q2 42.5 8 42.5H43" /><text x="24" y="30" fontSize="26" fill="currentColor" {...script}>m</text></I44>],
	['comment', <I44><path d="M0 8H44V32H37V44L25 32H0Z" {...solid} /></I44>],
	['toggle', <Box44><path d="M11 11L33 33M33 11L11 33" /></Box44>],
	['button', <Box44><circle cx="22" cy="22" r="10" /></Box44>, true],
	['number', <Box44><path d="M9 15L22 22L9 29Z" {...solid} /></Box44>, true],
	['slider', <Box44><path d="M7 22H37" /></Box44>, true],
	['dial', <I44 s={4}><path d="M14 40A20 20 0 1 1 30 40" /><path d="M22 25L29 8" /></I44>, true],
	['add', <I44><path d="M7 22H37M22 7V37" strokeWidth="6" /></I44>, true],
];

const Badge = ({ fill, x = 42, y = 4 }) => <circle cx={x} cy={y} r="12" fill={fill} stroke="none" />;

const leftTop = [
	['packages', <svg width="44" height="44" viewBox="0 0 44 44" overflow="visible" fill="currentColor"><path d="M22 1L41 12L22 23L3 12ZM2 15L20 26V44L2 34ZM42 15L24 26V44L42 34Z" /><Badge fill={color.orange} x={43} y={8} /></svg>],
	['target', <I44 s={4}><circle cx="22" cy="22" r="20" /><circle cx="22" cy="22" r="9" /></I44>],
	['device', <I44><path d="M2 7H42V36H2ZM2 13H42M2 30H42M8 2V7M36 36V41M8 36V41" /></I44>],
	['audio', <I44><ellipse cx="14" cy="37" rx="8" ry="6" {...solid} /><path d="M21 37V1Q24 8 31 13Q37 19 33 27" strokeWidth="3" /></I44>],
	['video', <I44 s={7}><path d="M4 0V44M40 0V44" strokeDasharray="7 5" /><path d="M15 11L33 22L15 33Z" {...solid} /></I44>],
	['images', <I44><rect x="1.5" y="1.5" width="41" height="41" /><circle cx="9" cy="9" r="4" {...solid} /><path d="M5 39V35L14 23L20 31L30 14L40 30V39Z" {...solid} /></I44>],
	['clippings', <I44><path d="M7 8L28 38Q33 45 39 41Q44 36 39 30L17 4Q11 -1 6 3Q1 8 4 14L25 36Q30 40 33 37Q35 33 32 29L16 11Q12 10 13 15L24 29" /></I44>],
	['plugins', <I44><path d="M0 18H10Q14 2 30 0V9H43V15H30V29H43V35H30V44Q14 42 10 27H0Z" {...solid} /></I44>],
	['max for live', <M4L w={44} />],
];

const leftBottom = [
	['vizzie', <I44><circle cx="22" cy="22" r="22" {...solid} /><text x="22" y="32" fontSize="34" fill="#a5a5a5" {...script}>v</text></I44>],
	['beap', <I44><circle cx="22" cy="22" r="22" {...solid} /><text x="22" y="33" fontSize="34" fill="#a5a5a5" {...script}>b</text></I44>],
	['favorites', <FaStar size={44} />],
];

const rightTop = [
	['search', <I44 s={4}><circle cx="17" cy="17" r="15" /><path d="M27 28L42 42" strokeWidth="6" /></I44>],
	['info', <I44><circle cx="22" cy="22" r="22" {...solid} /><text x="22" y="36" fontSize="40" fill="#a5a5a5" {...script}>i</text></I44>],
	['reference', <I44><path d="M0 4H21V40H0ZM23 4H44V40H23Z" {...solid} /></I44>],
	['console', <svg width="44" height="44" viewBox="0 0 44 44" overflow="visible" fill="none" stroke="currentColor" strokeWidth="4"><path d="M0 5H7M10 5H44M0 14H7M10 14H44M0 22H7M10 22H44M0 31H7M10 31H44M0 40H7M10 40H44" /><Badge fill="#ff5a3c" x={43} y={8} /></svg>],
];

const rightBottom = [
	['snapshots', <I44><path d="M10 9V0H34V9H40Q44 9 44 13V40Q44 44 40 44H4Q0 44 0 40V13Q0 9 4 9Z" {...solid} /><circle cx="26" cy="26" r="9" stroke="#929292" strokeWidth="6" /><path d="M6 14V42" stroke="#929292" strokeWidth="6" strokeDasharray="4 5" /></I44>],
	['parameters', <I44 s={4}><g stroke={color.dark} fill={color.dark}><path d="M7 2V42M22 2V42M37 2V42" /><circle cx="7" cy="23" r="4" /><circle cx="22" cy="13" r="4" /><circle cx="37" cy="29" r="4" /></g></I44>],
];

const bottomTools = [
	['lock', 31, <I44 s={4}><path d="M2 18V12Q2 4 9 4Q17 4 17 12V20" /><path d="M14 20H44V42H14Z" {...solid} /><circle cx="29" cy="28" r="3" fill={color.window} stroke="none" /><path d="M29 28V36" stroke={color.window} strokeWidth="3" /></I44>],
	['select', 31, <I44 s={6}><path d="M22 41H3V3H41V32" /><path d="M21 14L41 32H34L38 42L32 44L28 34L23 38Z" {...solid} /></I44>],
	['freeze', 31, <I44><path d="M22 2V42M0 22H44M7 7L37 37M37 7L7 37M14 3L22 11L30 3M14 41L22 33L30 41M4 15L12 22L4 29M40 15L32 22L40 29" /></I44>],
	['warning', 43, <I44><path d="M22 0L44 44H0Z" fill={color.dark} stroke="none" /><path d="M22 15V30M22 34V39" stroke={color.window} strokeWidth="5" /></I44>],
	['present', 42, <I44><path d="M0 1H44V28H0Z" {...solid} /><path d="M22 26L6 42M22 26L38 42" strokeWidth="5" /></I44>],
	['arrange', 43, <I44><path d="M0 5H30V15H12V32H0Z" {...solid} /><path d="M14 18H44V40H14Z" {...solid} /></I44>],
	['mute', 31, <I44><path d="M0 11H14L23 33H0ZM44 11H22L31 33H44Z" {...solid} /><path d="M13 1L31 43" strokeWidth="3" /></I44>],
	['grid', 42, <I44><path d="M9 0V44M22 0V44M35 0V44M0 9H44M0 22H44M0 36H44" strokeWidth="2.5" /></I44>],
	['tree', 43, <I44 s={2}><path d="M16 6H28V16H16ZM0 29H13V39H0ZM15 29H28V39H15ZM31 29H44V39H31Z" {...solid} /><path d="M22 15L6 30M22 15V30M22 15L38 30" /></I44>],
	['attach', 40, <svg width="44" height="44" viewBox="0 0 44 44" fill="none" stroke={color.dark} strokeWidth="3"><path d="M34 0V20M24 10H44" strokeWidth="4" /><path d="M8 24L21 40Q27 45 31 40Q34 36 30 31L12 10Q7 6 3 10Q-1 14 3 19L20 38Q24 40 26 37Q27 34 24 31L10 15" /></svg>],
	['tools', 40, <FaWrench size={44} />],
	['piano', 42, <I44><path d="M0 0H10V30H13V44H0ZM16 30H18V0H27V30H29V44H16ZM32 30H34V0H44V44H32Z" {...solid} /></I44>],
	['keyboard', 42, <I44 s={7}><path d="M0 5H44M6 16H38M0 27H44" strokeDasharray="8 4" /><path d="M5 40H39" /></I44>],
	['live', 44, <svg width="44" height="44" fill={color.orange}><path d="M0 0H7V44H0ZM12 0H19V44H12ZM25 0H32V44H25ZM37 0H44V44H37Z" /></svg>],
	['play', 0, <svg width="62" height="62" fill="none" stroke={color.dark} strokeWidth="10"><path d="M33 5A26 26 0 0 1 57 29M57 33A26 26 0 0 1 33 57M29 57A26 26 0 0 1 5 33M5 29A26 26 0 0 1 29 5" /><path d="M21 20L40 31L21 42Z" fill={color.ink} stroke="none" /></svg>],
];

const meterRows = Array.from({ length: 21 }, (_, i) => 70 + i * 11);

const BottomBar = styled.div`
	display:flex;
	align-items:center;
	height:94px;
	padding-left:16px;
`;

const BarTool = styled.button`
	margin-right:${props => props.$gap}px;
`;

const MeterBox = styled.div`
	margin-top:auto;
	padding-bottom:5px;
`;

const PatcherPane = () => (
	<Patcher>
		<PatchTitle>
			<Lights>
				<Light $color="#ff5f57" $dot="#7b0500" aria-label="Close" />
				<Light $color="#febc2e" aria-label="Minimize" />
				<Light $color="#28c840" aria-label="Zoom" />
			</Lights>
			<DocTitle>
				<svg width="36" height="40">
					<path d="M1 0H26L35 9V40H1Z" fill="#f4f4f4" stroke="#e2e2e2" />
					<rect x="6" y="8" width="22" height="21" rx="6" fill="#757575" />
					<path d="M10 22V15L13 20L16 15V22" stroke="#ffffff" strokeWidth="2" fill="none" />
					<path d="M18 22L24 14" stroke="#f0708a" strokeWidth="3" />
				</svg>
				<Title $ink="#4a4a4a">New Generator (unlocked)</Title>
			</DocTitle>
		</PatchTitle>
		<PatchTools>
			<Zoom>100%<Tri w={17} h={14} /></Zoom>
			{topTools.map(([name, icon, more]) => (
				<Tool key={name} aria-label={name}>{icon}{more ? <Tri w={19} h={10} /> : null}</Tool>
			))}
			<Tool $left={47} aria-label="format">
				<I44 s={3}>
					<path d="M20 8L38 22L20 41L3 24Z" />
					<path d="M3 24L38 21L20 42Z" {...solid} />
					<ellipse cx="40" cy="30" rx="4" ry="7" {...solid} />
					<path d="M14 2L24 12M25 2L17 13" />
				</I44>
			</Tool>
			<Grow />
			<svg width="56" height="54" viewBox="0 3 56 54" overflow="visible">
				{calendarCells.map(([x, y, on]) => (
					<rect key={`${x}-${y}`} x={x + 1} y={y} width="5" height="8" fill={on ? color.orange : color.ink} />
				))}
			</svg>
		</PatchTools>
		<PatchMiddle>
			<SideBar>
				<SideGroup $top={54} $gap={59}>{leftTop.map(([name, icon]) => <button key={name} aria-label={name}>{icon}</button>)}</SideGroup>
				<SideGroup $top={37} $gap={59}>{leftBottom.map(([name, icon]) => <button key={name} aria-label={name}>{icon}</button>)}</SideGroup>
			</SideBar>
			<Canvas>
				<CanvasArt width="1168" height="1310">
					<defs>
						<pattern id="dots" width="22.3" height="22.3" patternUnits="userSpaceOnUse">
							<rect x="1" y="1" width="2.5" height="2.5" fill="#868686" />
						</pattern>
					</defs>
					<rect width="424" height="410" fill="#a5a5a5" />
					<rect width="1168" height="1310" fill="url(#dots)" />
					<path d="M424.5 0V410.5H0" fill="none" stroke="#2b2b2b" strokeWidth="3" />
					<rect x="98" y="22" width="67" height="67" fill="#d0d0d0" />
					<circle cx="131" cy="56" r="21" fill="none" stroke="#a9a9a9" strokeWidth="4" />
					<path d="M115 22A9 9 0 0 0 133 22Z" fill="#a9a9a9" />
					<path d="M116 89V88A8 8 0 0 1 132 88V89" fill="#3a3a3a" stroke="#c9da2e" strokeWidth="3" />
				</CanvasArt>
				{objects.map(item => <PatchObject key={item.text} {...item} />)}
				<CanvasArt width="1168" height="1310" fill="none">
					{cords.map(d => (
						<g key={d}>
							<path d={d} stroke="#8d8d8d" strokeWidth="6" />
							<path d={d} stroke="#505050" strokeWidth="4" strokeLinecap="round" />
						</g>
					))}
				</CanvasArt>
			</Canvas>
			<SideBar>
				<SideGroup $top={87} $gap={84}>{rightTop.map(([name, icon]) => <button key={name} aria-label={name}>{icon}</button>)}</SideGroup>
				<SideGroup $top={179} $gap={84}>{rightBottom.map(([name, icon]) => <button key={name} aria-label={name}>{icon}</button>)}</SideGroup>
				<MeterBox>
					<svg width="51" height="301" fill={color.dark}>
						<path d="M0 0H20V66H0ZM32 0H51V66H32Z" />
						{meterRows.map(y => <path key={y} d={`M0 ${y}h20v8h-20zM32 ${y}h19v8h-19z`} />)}
					</svg>
				</MeterBox>
			</SideBar>
		</PatchMiddle>
		<BottomBar>
			{bottomTools.map(([name, gap, icon]) => <BarTool key={name} $gap={gap} aria-label={name}>{icon}</BarTool>)}
		</BottomBar>
	</Patcher>
);

export default function App() {
	return (
		<Desktop>
			<GlobalStyle />
			<LiveWindow>
				<TitleBar>
					<Lights>
						<Light $dot="#4d4d4d" aria-label="Close" />
						<Light aria-label="Minimize" />
						<Light aria-label="Zoom" />
					</Lights>
					<Title>Untitled</Title>
				</TitleBar>
				<Controls />
				<Upper>
					<BrowserPane />
					<Session><DropZone>Drop Files and Devices Here</DropZone></Session>
					<MixerPane />
				</Upper>
				<Detail>
					<ClipPane />
					<EditorPane />
				</Detail>
				<Status />
			</LiveWindow>
			<PatcherPane />
		</Desktop>
	);
}
